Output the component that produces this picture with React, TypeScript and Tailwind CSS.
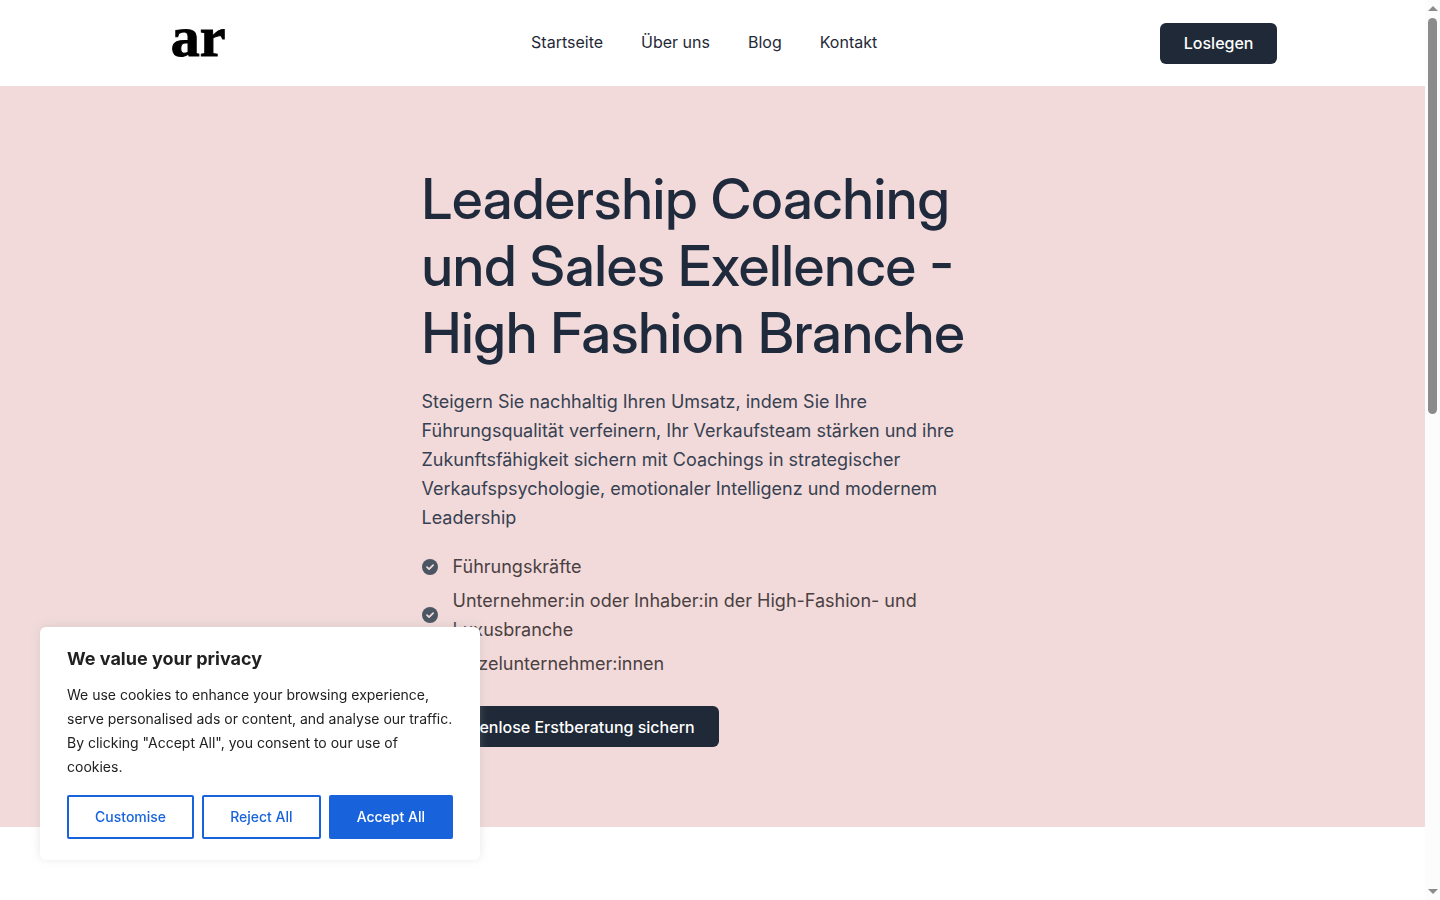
import React, { useState } from 'react';

const NAV_LINKS = ['Startseite', 'Über uns', 'Blog', 'Kontakt'];

const AUDIENCE = [
  'Führungskräfte',
  'Unternehmer:in oder Inhaber:in der High-Fashion- und Luxusbranche',
  'Einzelunternehmer:innen',
];

function CheckIcon() {
  return (
    <svg viewBox="0 0 16 16" className="h-4 w-4 shrink-0" aria-hidden="true">
      <circle cx="8" cy="8" r="8" fill="#4b5563" />
      <path
        d="M5 8.2l2.1 1.9 4-3.9"
        fill="none"
        stroke="#f2dada"
        strokeWidth="1.8"
        strokeLinecap="round"
        strokeLinejoin="round"
      />
    </svg>
  );
}

function Header() {
  return (
    <header className="bg-white">
      <div className="mx-auto flex h-[86px] max-w-[1130px] items-center justify-between">
        <a
          href="#"
          className="w-[101px] pb-3 text-center font-['Liberation_Serif',serif] text-[58px] leading-[58px] font-bold text-black [-webkit-text-stroke:1px_black]"
        >
          ar
        </a>
        <nav className="flex gap-[38px] pb-0.5">
          {NAV_LINKS.map((link) => (
            <a key={link} href="#" className="text-base text-[#1f2937]">
              {link}
            </a>
          ))}
        </nav>
        <button type="button" className="h-[41px] rounded-md bg-[#1f2937] px-6 text-base font-medium text-white">
          Loslegen
        </button>
      </div>
    </header>
  );
}

function Hero() {
  return (
    <section className="bg-[#f2dada] py-20">
      <div className="mx-auto max-w-[582px]">
        <h1 className="font-['Inter_Display','Inter',sans-serif] text-[56px] leading-[67px] font-medium text-[#1f2a3c]">
          Leadership Coaching und Sales Exellence - High Fashion Branche
        </h1>
        <p className="mt-5 text-lg leading-[29px] text-[#374151]">
          Steigern Sie nachhaltig Ihren Umsatz, indem Sie Ihre Führungsqualität verfeinern, Ihr Verkaufsteam
          stärken und ihre Zukunftsfähigkeit sichern mit Coachings in strategischer Verkaufspsychologie,
          emotionaler Intelligenz und modernem Leadership
        </p>
        <ul className="mt-5 flex flex-col gap-[5px]">
          {AUDIENCE.map((item) => (
            <li key={item} className="flex items-center gap-[15px] text-lg leading-[29px] text-[#4a4041]">
              <CheckIcon />
              <span>{item}</span>
            </li>
          ))}
        </ul>
        <button type="button" className="mt-7 h-[41px] rounded-md bg-[#1f2937] px-6 text-base font-medium text-white">
          Kostenlose Erstberatung sichern
        </button>
      </div>
    </section>
  );
}

function CookieBanner({ onClose }: { onClose: () => void }) {
  const outline = 'h-11 grow rounded-xs border-2 border-[#1863dc] text-sm font-medium';

  return (
    <div
      role="dialog"
      aria-labelledby="cookie-title"
      className="fixed bottom-10 left-10 z-20 w-[440px] rounded-md bg-white px-[27px] pt-5 pb-[21px] text-[#212121] shadow-[0_-1px_10px_0_#acabab4d]"
    >
      <h2 id="cookie-title" className="text-lg leading-6 font-bold">
        We value your privacy
      </h2>
      <p className="mt-3 text-sm leading-6">
        We use cookies to enhance your browsing experience, serve personalised ads or content, and analyse our
        traffic. By clicking "Accept All", you consent to our use of cookies.
      </p>
      <div className="mt-4 flex gap-2">
        <button type="button" onClick={onClose} className={`${outline} bg-white text-[#1863dc]`}>
          Customise
        </button>
        <button type="button" onClick={onClose} className={`${outline} bg-white text-[#1863dc]`}>
          Reject All
        </button>
        <button type="button" onClick={onClose} className={`${outline} bg-[#1863dc] text-white`}>
          Accept All
        </button>
      </div>
    </div>
  );
}

function ScrollTrack() {
  return (
    <div className="fixed inset-y-0 right-0 flex w-[15px] flex-col items-center bg-[#fcfcfc] py-1.5" aria-hidden="true">
      <svg viewBox="0 0 10 5" className="h-[5px] w-2.5" fill="#8b8b8b">
        <path d="M5 0l5 5H0z" />
      </svg>
      <div className="mt-[7px] h-[44vh] w-[9px] rounded-full bg-[#8b8b8b]" />
      <svg viewBox="0 0 10 5" className="mt-auto h-[5px] w-2.5" fill="#8b8b8b">
        <path d="M0 0h10L5 5z" />
      </svg>
    </div>
  );
}

export default function App() {
  const [showBanner, setShowBanner] = useState(true);

  return (
    <div className="min-h-screen bg-white pr-[15px] font-['Inter',sans-serif]">
      <Header />
      <main>
        <Hero />
      </main>
      {showBanner && <CookieBanner onClose={() => setShowBanner(false)} />}
      <ScrollTrack />
    </div>
  );
}
